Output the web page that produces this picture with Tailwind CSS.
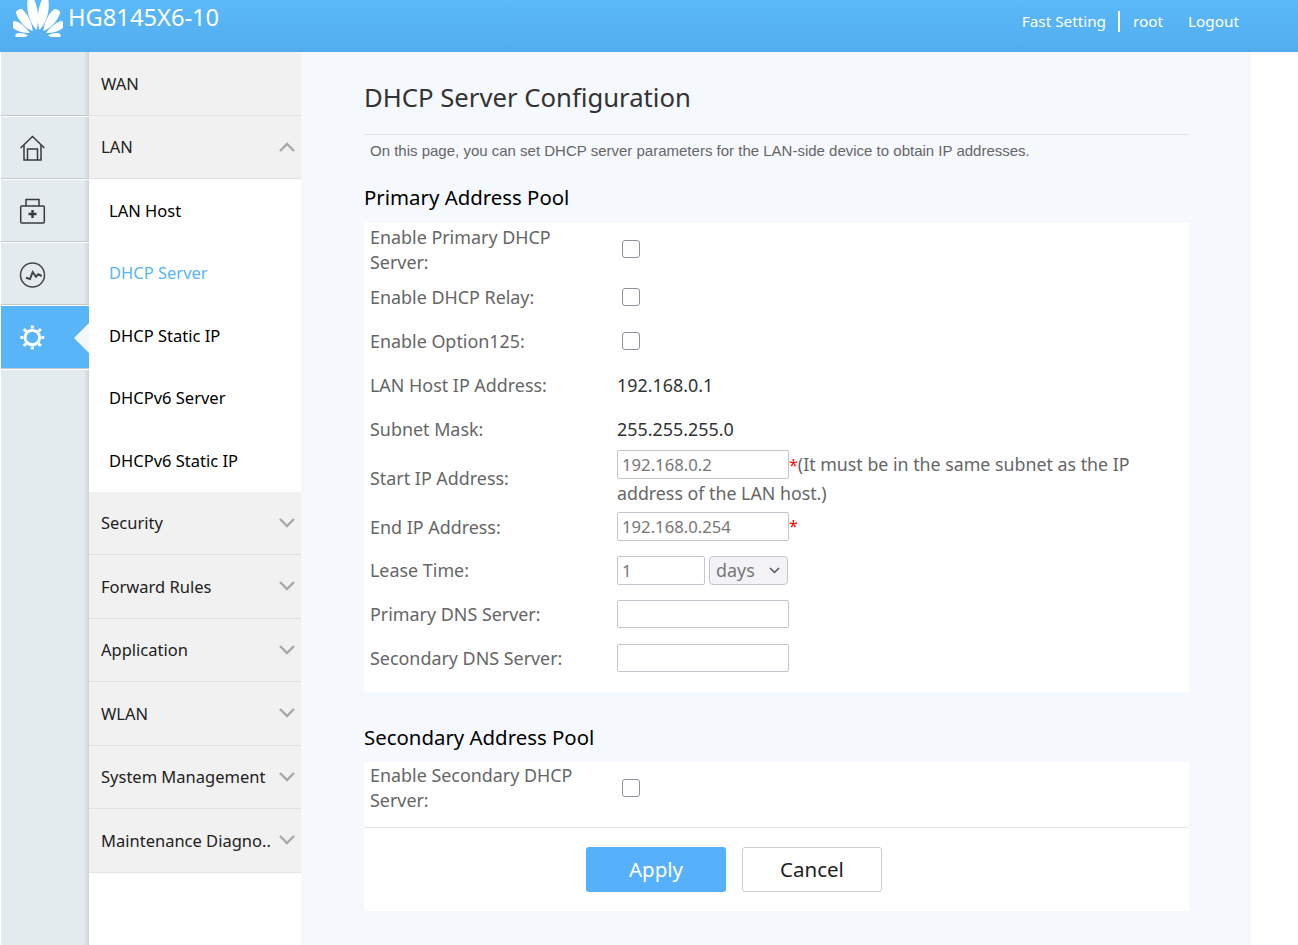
<!DOCTYPE html>
<html><head><meta charset="utf-8">
<script src="https://cdn.jsdelivr.net/npm/@tailwindcss/browser@4"></script>
</head>
<body class="bg-white overflow-hidden font-['Noto_Sans',sans-serif]">
<div class="w-[1298px] h-[945px] flex flex-col overflow-hidden">
  <header class="h-[52px] shrink-0 flex bg-gradient-to-b from-[#5bb9f9] to-[#52adee] text-white">
    <svg class="ml-[13px] w-[50px] h-[37px]" viewBox="0 0 50 37" fill="#fff">
      <g transform="translate(25 36)">
        <path transform="translate(-1 0) rotate(-10)" d="M.5 -6C-5 -14 -6.500 -27 -3 -37L3 -38C6.500 -27 5 -15 .5 -6Z"/>
        <path transform="translate(1 0) rotate(10)" d="M-.5 -6C5 -14 6.500 -27 3 -37L-3 -38C-6.500 -27 -5 -15 -.5 -6Z"/>
        <path transform="translate(-2 0) rotate(-33)" d="M0 -6C-5 -13 -6.500 -23 -4 -31C-2 -32 1 -32 3 -30C5 -22 4 -14 0 -6Z"/>
        <path transform="translate(2 0) rotate(33)" d="M0 -6C5 -13 6.500 -23 4 -31C2 -32 -1 -32 -3 -30C-5 -22 -4 -14 0 -6Z"/>
        <path transform="translate(-3 0) rotate(-59)" d="M0 -6C-4 -12 -5.500 -19 -4 -26C-2 -27 1 -27 2.500 -25C4 -19 3 -12 0 -6Z"/>
        <path transform="translate(3 0) rotate(59)" d="M0 -6C4 -12 5.500 -19 4 -26C2 -27 -1 -27 -2.500 -25C-4 -19 -3 -12 0 -6Z"/>
        <path transform="translate(-3 0) rotate(-86)" d="M0 -7C-2.500 -10 -3.500 -14 -2.500 -19C-1 -20 .5 -20 1.500 -18C2.500 -14 2 -10 0 -7Z"/>
        <path transform="translate(3 0) rotate(86)" d="M0 -7C2.500 -10 3.500 -14 2.500 -19C1 -20 -.5 -20 -1.500 -18C-2.500 -14 -2 -10 0 -7Z"/>
      </g>
    </svg>
    <div class="ml-[5px] text-[23.700px] leading-[34px] h-[34px]">HG8145X6-10</div>
    <nav class="ml-auto mr-[59px] flex items-start pt-[10px] text-[15.300px] leading-[22px]">
      <span>Fast Setting</span>
      <span class="ml-[12px] mr-[13px] mt-[1px] w-[2px] h-[21px] bg-white"></span>
      <span>root</span>
      <span class="ml-[25px]">Logout</span>
    </nav>
  </header>
  <div class="flex flex-1 min-h-0">
    <aside class="w-[89px] shrink-0 border-l border-white bg-[#e4ebef] flex flex-col shadow-[inset_-5px_0_4px_-3px_#c9cfd3]">
      <div class="h-[64px] border-b border-b-[#c4c8ca]"></div>
      <div class="h-[63px] border-t border-t-white border-b border-b-[#c4c8ca] flex items-center pl-[19px]">
        <svg class="w-[26px] h-[26px] overflow-visible" viewBox="0 0 26 26" fill="none" stroke="#3a3a3a" stroke-width="1.500"><path d="M.6 13 12.500 1.500 24.400 13"/><path d="M4 10v15h17V10"/><path d="M7.500 25V14h10v11"/></svg>
      </div>
      <div class="h-[63px] border-t border-t-white border-b border-b-[#c4c8ca] flex items-center pl-[19px]">
        <svg class="w-[26px] h-[26px] overflow-visible" viewBox="0 0 26 26" fill="none" stroke="#3a3a3a" stroke-width="1.500"><rect x=".7" y="8" width="23.600" height="17" rx="1"/><path d="M6 8V1.500h13V8"/><path d="M12.500 12v8M8.500 16h8" stroke-width="2.400"/></svg>
      </div>
      <div class="h-[63px] border-t border-t-white border-b border-b-[#c4c8ca] flex items-center pl-[19px]">
        <svg class="w-[26px] h-[26px] overflow-visible" viewBox="0 0 26 26" fill="none" stroke="#444" stroke-width="1.500"><circle cx="12.500" cy="14" r="12"/><path d="M6 16.700 10 18 12.700 11 16 15.700 18.300 13.300 21.700 15" stroke-width="2"/></svg>
      </div>
      <div class="relative h-[64px] border-t border-t-white border-b border-b-[#c4c8ca] bg-[#57b5f8] flex items-center pl-[19px]">
        <svg class="w-[26px] h-[26px] overflow-visible" viewBox="0 0 26 26" fill="none" stroke="#fff"><circle cx="12.300" cy="13.500" r="7.300" stroke-width="3"/><path d="M12.300 1.500v3M12.300 22.500v3M.3 13.500h3M21.300 13.500h3M3.800 5l2.300 2.300M18.500 19.700l2.300 2.300M3.800 22l2.300-2.300M18.500 7.300 20.800 5" stroke-width="3"/></svg>
        <span class="absolute right-0 top-[17px] w-0 h-0 border-y-[15px] border-y-transparent border-r-[15px] border-r-[#f3f8fd]"></span>
      </div>
      <div class="h-[1px] bg-white"></div>
    </aside>
    <nav class="w-[212px] shrink-0 text-[16.500px] text-[#222]">
      <div class="h-[64px] pt-[2px] pl-[12px] flex items-center bg-[#f1f1f1] border-b border-[#e2e2e2]">WAN</div>
      <div class="h-[63px] pl-[12px] pr-[6px] flex items-center justify-between bg-[#f1f1f1] border-b border-[#e2e2e2]">LAN
        <svg class="w-[16px] h-[10px]" viewBox="0 0 16 10" fill="none" stroke="#a8a8a8" stroke-width="2.400"><path d="M1 9l7-7 7 7"/></svg>
      </div>
      <div class="h-[62.500px] pt-[3px] pl-[20px] flex items-center text-black">LAN Host</div>
      <div class="h-[62.500px] pt-[2px] pl-[20px] flex items-center text-[#57b5f8]">DHCP Server</div>
      <div class="h-[62.500px] pt-[3px] pl-[20px] flex items-center text-black">DHCP Static IP</div>
      <div class="h-[62.500px] pt-[2px] pl-[20px] flex items-center text-black">DHCPv6 Server</div>
      <div class="h-[62.500px] pt-[3px] pl-[20px] flex items-center text-black">DHCPv6 Static IP</div>
      <div class="h-[63px] pl-[12px] pr-[6px] flex items-center justify-between bg-[#f1f1f1] border-b border-[#e2e2e2]"><span class="pt-[2px]">Security</span>
        <svg class="w-[16px] h-[10px]" viewBox="0 0 16 10" fill="none" stroke="#a8a8a8" stroke-width="2.400"><path d="M1 1l7 7 7-7"/></svg>
      </div>
      <div class="h-[64px] pl-[12px] pr-[6px] flex items-center justify-between bg-[#f1f1f1] border-b border-[#e2e2e2]"><span class="pt-[2px]">Forward Rules</span>
        <svg class="w-[16px] h-[10px]" viewBox="0 0 16 10" fill="none" stroke="#a8a8a8" stroke-width="2.400"><path d="M1 1l7 7 7-7"/></svg>
      </div>
      <div class="h-[63px] pl-[12px] pr-[6px] flex items-center justify-between bg-[#f1f1f1] border-b border-[#e2e2e2]"><span class="pt-[2px]">Application</span>
        <svg class="w-[16px] h-[10px]" viewBox="0 0 16 10" fill="none" stroke="#a8a8a8" stroke-width="2.400"><path d="M1 1l7 7 7-7"/></svg>
      </div>
      <div class="h-[64px] pl-[12px] pr-[6px] flex items-center justify-between bg-[#f1f1f1] border-b border-[#e2e2e2]"><span class="pt-[2px]">WLAN</span>
        <svg class="w-[16px] h-[10px]" viewBox="0 0 16 10" fill="none" stroke="#a8a8a8" stroke-width="2.400"><path d="M1 1l7 7 7-7"/></svg>
      </div>
      <div class="h-[63px] pl-[12px] pr-[6px] flex items-center justify-between bg-[#f1f1f1] border-b border-[#e2e2e2]"><span class="pt-[2px]">System Management</span>
        <svg class="w-[16px] h-[10px]" viewBox="0 0 16 10" fill="none" stroke="#a8a8a8" stroke-width="2.400"><path d="M1 1l7 7 7-7"/></svg>
      </div>
      <div class="h-[64px] pl-[12px] pr-[6px] flex items-center justify-between bg-[#f1f1f1] border-b border-[#e2e2e2]"><span class="pt-[2px]">Maintenance Diagno..</span>
        <svg class="w-[16px] h-[10px]" viewBox="0 0 16 10" fill="none" stroke="#a8a8a8" stroke-width="2.400"><path d="M1 1l7 7 7-7"/></svg>
      </div>
    </nav>
    <main class="w-[950px] shrink-0 bg-[#f5f8fd] pl-[63px] pr-[62px]">
      <h1 class="h-[83px] pt-[26px] text-[25.700px] leading-[40px] text-[#333] border-b border-[#e4e4e4]">DHCP Server Configuration</h1>
      <p class="pl-[6px] pt-[7px] h-[39px] font-['Liberation_Sans',sans-serif] text-[15px] leading-[18px] text-[#666]">On this page, you can set DHCP server parameters for the LAN-side device to obtain IP addresses.</p>
      <h2 class="h-[49px] pt-[7px] text-[20.400px] leading-[32px] text-black">Primary Address Pool</h2>
      <section class="bg-white h-[469px] text-[17.900px] leading-[25px] text-[#666]">
        <div class="h-[52px] flex items-center">
          <div class="w-[253px] pl-[6px] pr-[20px] pt-[2px] shrink-0">Enable Primary DHCP Server:</div>
          <input type="checkbox" class="ml-[5px] w-[18px] h-[18px] appearance-none bg-white border border-[#8f8f9d] rounded-[3px]">
        </div>
        <div class="h-[44px] flex items-center">
          <div class="w-[253px] pl-[6px] shrink-0">Enable DHCP Relay:</div>
          <input type="checkbox" class="ml-[5px] w-[18px] h-[18px] appearance-none bg-white border border-[#8f8f9d] rounded-[3px]">
        </div>
        <div class="h-[44px] flex items-center">
          <div class="w-[253px] pl-[6px] shrink-0">Enable Option125:</div>
          <input type="checkbox" class="ml-[5px] w-[18px] h-[18px] appearance-none bg-white border border-[#8f8f9d] rounded-[3px]">
        </div>
        <div class="h-[44px] flex items-center">
          <div class="w-[253px] pl-[6px] shrink-0">LAN Host IP Address:</div>
          <div class="text-[#333]">192.168.0.1</div>
        </div>
        <div class="h-[44px] flex items-center">
          <div class="w-[253px] pl-[6px] shrink-0">Subnet Mask:</div>
          <div class="text-[#333]">255.255.255.0</div>
        </div>
        <div class="h-[53px] flex items-center">
          <div class="w-[253px] pl-[6px] pt-[1px] shrink-0">Start IP Address:</div>
          <div class="w-[540px] pt-[1px] text-[17.800px] leading-[28px]">
            <input value="192.168.0.2" class="w-[172px] h-[29px] px-[4px] border border-[#c5c5cf] rounded-[2px] align-top text-[#777] text-[16.700px]"><span class="text-[#f00] text-[16px]">*</span>(It must be in the same subnet as the IP address of the LAN host.)
          </div>
        </div>
        <div class="h-[44px] flex items-center">
          <div class="w-[253px] pl-[6px] pt-[2px] shrink-0">End IP Address:</div>
          <input value="192.168.0.254" class="w-[172px] h-[29px] px-[4px] border border-[#c5c5cf] rounded-[2px] text-[#777] text-[16.700px]"><span class="text-[#f00] text-[16px]">*</span>
        </div>
        <div class="h-[44px] flex items-center">
          <div class="w-[253px] pl-[6px] pt-[1px] shrink-0">Lease Time:</div>
          <input value="1" class="w-[88px] h-[29px] px-[4px] border border-[#c5c5cf] rounded-[2px] text-[#777] text-[16.700px]">
          <div class="ml-[4px] w-[79px] h-[29px] pl-[6px] pr-[7px] flex items-center justify-between bg-[#f3f3f6] border border-[#c5c5cf] rounded-[4px] text-[#777]">days
            <svg class="w-[11px] h-[7px]" viewBox="0 0 11 7" fill="none" stroke="#555" stroke-width="1.500"><path d="M1 1l4.500 4.500L10 1"/></svg>
          </div>
        </div>
        <div class="h-[44px] flex items-center">
          <div class="w-[253px] pl-[6px] pt-[1px] shrink-0">Primary DNS Server:</div>
          <input class="w-[172px] h-[28px] border border-[#c5c5cf] rounded-[2px]">
        </div>
        <div class="h-[44px] flex items-center">
          <div class="w-[253px] pl-[6px] pt-[1px] shrink-0">Secondary DNS Server:</div>
          <input class="w-[172px] h-[28px] border border-[#c5c5cf] rounded-[2px]">
        </div>
      </section>
      <h2 class="h-[70px] pt-[29px] text-[20.400px] leading-[32px] text-black">Secondary Address Pool</h2>
      <section class="bg-white text-[17.900px] leading-[25px] text-[#666]">
        <div class="h-[66px] pb-[13px] flex items-center border-b border-[#e4e4e4]">
          <div class="w-[253px] pl-[6px] pr-[20px] shrink-0">Enable Secondary DHCP Server:</div>
          <input type="checkbox" class="ml-[5px] w-[18px] h-[18px] appearance-none bg-white border border-[#8f8f9d] rounded-[3px]">
        </div>
        <div class="h-[83px] pt-[19px] pl-[222px] flex items-start gap-[16px] text-[20.500px]">
          <button class="w-[140px] h-[45px] rounded-[3px] bg-[#57b1fa] text-white">Apply</button>
          <button class="w-[140px] h-[45px] rounded-[3px] border border-[#cfcfcf] bg-white text-[#222]">Cancel</button>
        </div>
      </section>
    </main>
  </div>
</div>
</body></html>
